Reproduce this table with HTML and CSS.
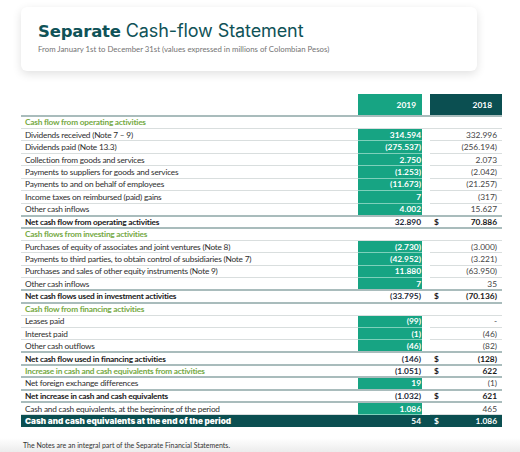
FILE: index.html
```html
<!DOCTYPE html>
<html lang="en">
<head>
<meta charset="utf-8">
<title>Separate Cash-flow Statement</title>
<link rel="stylesheet" href="styles.css">
</head>
<body>
<div class="card">
  <h1 class="title"><b>Separate</b> Cash-flow Statement</h1>
  <p class="sub">From January 1st to December 31st (values expressed in millions of Colombian Pesos)</p>
</div>
<table class="fs">
  <colgroup><col class="c-lab"><col class="c-19"><col class="c-gap"><col class="c-18"></colgroup>
  <thead>
    <tr><th></th><th class="h19">2019</th><th></th><th class="h18">2018</th></tr>
  </thead>
  <tbody>
    <tr class="sec first"><td>Cash flow from operating activities</td><td></td><td></td><td></td></tr>
    <tr><td>Dividends received (Note 7 – 9)</td><td class="v19">314.594</td><td class="gap"></td><td class="v18">332.996</td></tr>
    <tr><td>Dividends paid (Note 13.3)</td><td class="v19">(275.537)</td><td class="gap"></td><td class="v18">(256.194)</td></tr>
    <tr><td>Collection from goods and services</td><td class="v19">2.750</td><td class="gap"></td><td class="v18">2.073</td></tr>
    <tr><td>Payments to suppliers for goods and services</td><td class="v19">(1.253)</td><td class="gap"></td><td class="v18">(2.042)</td></tr>
    <tr><td>Payments to and on behalf of employees</td><td class="v19">(11.673)</td><td class="gap"></td><td class="v18">(21.257)</td></tr>
    <tr><td>Income taxes on reimbursed (paid) gains</td><td class="v19">7</td><td class="gap"></td><td class="v18">(317)</td></tr>
    <tr><td>Other cash inflows</td><td class="v19">4.002</td><td class="gap"></td><td class="v18">15.627</td></tr>
    <tr class="total"><td>Net cash flow from operating activities</td><td class="v19">32.890</td><td></td><td class="v18"><span class="cur">$</span>70.886</td></tr>
    <tr class="sec"><td>Cash flows from investing activities</td><td></td><td></td><td></td></tr>
    <tr><td>Purchases of equity of associates and joint ventures (Note 8)</td><td class="v19">(2.730)</td><td class="gap"></td><td class="v18">(3.000)</td></tr>
    <tr><td>Payments to third parties, to obtain control of subsidiaries (Note 7)</td><td class="v19">(42.952)</td><td class="gap"></td><td class="v18">(3.221)</td></tr>
    <tr><td>Purchases and sales of other equity instruments (Note 9)</td><td class="v19">11.880</td><td class="gap"></td><td class="v18">(63.950)</td></tr>
    <tr><td>Other cash inflows</td><td class="v19">7</td><td class="gap"></td><td class="v18">35</td></tr>
    <tr class="total"><td>Net cash flows used in investment activities</td><td class="v19">(33.795)</td><td></td><td class="v18"><span class="cur">$</span>(70.136)</td></tr>
    <tr class="sec"><td>Cash flow from financing activities</td><td></td><td></td><td></td></tr>
    <tr><td>Leases paid</td><td class="v19">(99)</td><td class="gap"></td><td class="v18">-</td></tr>
    <tr><td>Interest paid</td><td class="v19">(1)</td><td class="gap"></td><td class="v18">(46)</td></tr>
    <tr><td>Other cash outflows</td><td class="v19">(46)</td><td class="gap"></td><td class="v18">(82)</td></tr>
    <tr class="total"><td>Net cash flow used in financing activities</td><td class="v19">(146)</td><td></td><td class="v18"><span class="cur">$</span>(128)</td></tr>
    <tr class="total inc"><td>Increase in cash and cash equivalents from activities</td><td class="v19">(1.051)</td><td></td><td class="v18"><span class="cur">$</span>622</td></tr>
    <tr><td>Net foreign exchange differences</td><td class="v19">19</td><td class="gap"></td><td class="v18">(1)</td></tr>
    <tr class="total"><td>Net increase in cash and cash equivalents</td><td class="v19">(1.032)</td><td></td><td class="v18"><span class="cur">$</span>621</td></tr>
    <tr><td>Cash and cash equivalents, at the beginning of the period</td><td class="v19">1.086</td><td class="gap"></td><td class="v18">465</td></tr>
    <tr class="final"><td>Cash and cash equivalents at the end of the period</td><td class="v19">54</td><td></td><td class="v18"><span class="cur">$</span>1.086</td></tr>
  </tbody>
</table>
<p class="note">The Notes are an integral part of the Separate Financial Statements.</p>
</body>
</html>
```

FILE: styles.css
```css
* { box-sizing: border-box; }
html, body { margin: 0; padding: 0; }
body {
  width: 520px;
  height: 452px;
  overflow: hidden;
  background: linear-gradient(to bottom, #ffffff 0, #ffffff 438px, #ececec 452px);
  font-family: "Lato", sans-serif;
  color: #2e2e2e;
}
.card {
  margin: 7px 43px 0 21px;
  height: 64px;
  background: #fff;
  border-radius: 6px;
  box-shadow: 0 3px 10px rgba(0, 0, 0, 0.12);
  padding: 14px 0 0 17px;
}
.title {
  margin: 0;
  font-family: "Inter", sans-serif;
  font-size: 18px;
  line-height: 20px;
  font-weight: 400;
  color: #0f5257;
  letter-spacing: -0.1px;
}
.title b {
  font-family: "DejaVu Sans", sans-serif;
  font-size: 16.5px;
  font-weight: 700;
  letter-spacing: -0.2px;
}
.sub {
  margin: 2px 0 0;
  font-size: 7.8px;
  line-height: 10px;
  color: #737373;
}
.fs {
  margin: 23px 0 0 21px;
  width: 481px;
  border-collapse: collapse;
  table-layout: fixed;
  font-size: 8.3px;
  letter-spacing: -0.22px;
  line-height: 10px;
}
.c-lab { width: 337px; }
.c-19 { width: 64px; }
.c-gap { width: 8px; }
.c-18 { width: 72px; }
.fs th {
  height: 22px;
  padding: 0;
  font-size: 8.4px;
  letter-spacing: 0;
  font-weight: 700;
  color: #fff;
  text-align: right;
}
.fs th.h19 { background: #17a483; padding-right: 6px; }
.fs th.h18 { background: #0b4f51; padding-right: 10px; }
.fs tbody tr { height: 12.45px; }
.fs td {
  padding: 0;
  white-space: nowrap;
  border-bottom: 1px solid #d9dede;
}
.fs td:first-child { padding-left: 4px; }
.fs td.gap { border-bottom: none; }
.fs td.v19 {
  background: #17a483;
  color: #fff;
  font-size: 8.4px;
  letter-spacing: 0;
  font-weight: 700;
  text-align: right;
  padding-right: 1px;
  border-bottom-color: #7fd0bb;
}
.fs td.v18 {
  text-align: right;
  font-size: 8.4px;
  letter-spacing: 0;
  padding-right: 5px;
  color: #444;
}
.cur { float: left; padding-left: 4px; font-weight: 700; }
.fs tr.first td { border-top: 2px solid #a9bcbc; }
.fs tr.sec td:first-child { color: #76aa45; font-weight: 700; }
.fs tr.total td {
  border-top: 2px solid #a9bcbc;
  border-bottom: 2px solid #a9bcbc;
  font-weight: 700;
  color: #1a1a1a;
}
.fs tr.total td.v19 { background: #fff; color: #1e2a3a; }
.fs tr.total td.v18 { color: #1a1a1a; }
.fs tr.inc td:first-child { color: #76aa45; }
.fs tr.final td {
  background: #0b4f51;
  color: #fff;
  font-weight: 700;
  border-bottom: none;
}
.fs tr.final td:first-child {
  font-family: "Inter", sans-serif;
  font-weight: 900;
  font-size: 8.2px;
  letter-spacing: 0;
}
.fs tr.final td.v19, .fs tr.final td.v18 { color: #fff; }
.note {
  margin: 13px 0 0 23px;
  font-size: 7px;
  line-height: 10px;
  color: #333;
}
```
